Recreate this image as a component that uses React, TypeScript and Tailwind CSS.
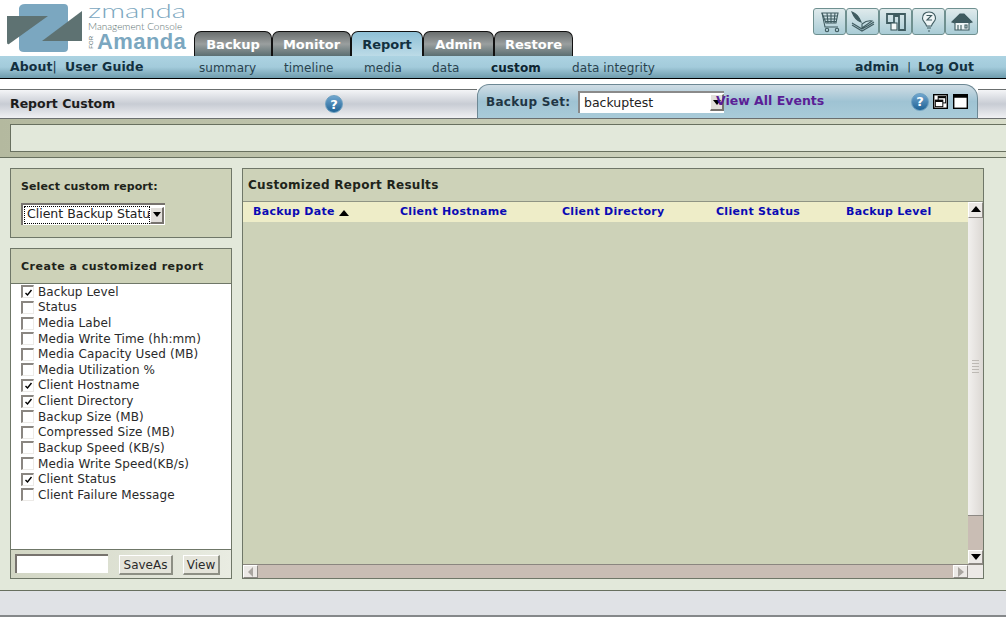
import React from 'react';

const font = { fontFamily: '"DejaVu Sans", sans-serif' };

const tabs = [
  { name: 'Backup', width: 'w-[78px]' },
  { name: 'Monitor', width: 'w-[79px]' },
  { name: 'Report', width: 'w-[72px]', active: true },
  { name: 'Admin', width: 'w-[71px]' },
  { name: 'Restore', width: 'w-[79px]' },
];

const subLinks = [
  { name: 'summary', width: 'w-[85px]' },
  { name: 'timeline', width: 'w-[80px]' },
  { name: 'media', width: 'w-[68px]' },
  { name: 'data', width: 'w-[59px]' },
  { name: 'custom', width: 'w-[81px]', bold: true },
  { name: 'data integrity', width: 'w-[100px]' },
];

const reportFields = [
  { name: 'Backup Level', checked: true },
  { name: 'Status' },
  { name: 'Media Label' },
  { name: 'Media Write Time (hh:mm)' },
  { name: 'Media Capacity Used (MB)' },
  { name: 'Media Utilization %' },
  { name: 'Client Hostname', checked: true },
  { name: 'Client Directory', checked: true },
  { name: 'Backup Size (MB)' },
  { name: 'Compressed Size (MB)' },
  { name: 'Backup Speed (KB/s)' },
  { name: 'Media Write Speed(KB/s)' },
  { name: 'Client Status', checked: true },
  { name: 'Client Failure Message' },
];

const columns = [
  { name: 'Backup Date', width: 'w-[147px]', sorted: true },
  { name: 'Client Hostname', width: 'w-[162px]' },
  { name: 'Client Directory', width: 'w-[154px]' },
  { name: 'Client Status', width: 'w-[130px]' },
  { name: 'Backup Level', width: 'w-[110px]' },
];

const Logo = () => (
  <div className="flex w-[194px] h-[56px] shrink-0 pl-[7px] pt-[4px]">
    <svg width="76" height="49" viewBox="0 0 76 49" className="shrink-0">
      <path d="M18 0 H57 Q61 0 61 4 V44 Q61 48 57 48 H17 Q12 48 12 44 V4 Q13 0 18 0 Z" fill="#7ba7c0" />
      <path d="M0 12 H41 L2 40 Q0 41 0 38 Z" fill="#5e7272" />
      <path d="M75 7 V37 H35 Z" fill="#5e7272" />
    </svg>
    <div className="ml-[5px] -mt-[3px] flex flex-col text-[#7ba7c0] leading-none">
      <span className="h-[18px] text-[20px] leading-[18px] font-light whitespace-nowrap inline-block origin-left scale-x-[1.48]" style={{ fontFamily: 'Lato, sans-serif' }}>zmanda</span>
      <span className="text-[#5e7272] text-[10px] h-[14px] leading-[14px] font-light whitespace-nowrap" style={{ fontFamily: 'Lato, sans-serif' }}>Management Console</span>
      <div className="flex items-center h-[18px]">
        <span className="text-[#5e7272] text-[6px] w-[9px] [writing-mode:vertical-rl] rotate-180" style={{ fontFamily: '"Liberation Sans", sans-serif' }}>FOR</span>
        <span className="text-[22px] font-bold leading-[18px] tracking-[0.4px]" style={{ fontFamily: '"Liberation Sans", sans-serif' }}>Amanda</span>
      </div>
    </div>
  </div>
);

const ToolIcon = ({ children }: { children: React.ReactNode }) => (
  <div className="w-[33px] h-[27px] flex items-center justify-center border border-[#6f9090] rounded-[3px] bg-gradient-to-b from-[#dfeaec] to-[#a9ccd6]">
    <svg width="26" height="22" viewBox="0 0 26 22" fill="none" stroke="#3f5b60" strokeWidth="1.1">
      {children}
    </svg>
  </div>
);

const HelpIcon = () => (
  <span className="w-[18px] h-[18px] rounded-full bg-gradient-to-b from-[#6fa6cf] to-[#1f6496] border border-[#6c9fc0] text-white text-[13px] font-bold flex items-center justify-center leading-none">?</span>
);

const WindowIcon = ({ restore }: { restore?: boolean }) => (
  <svg width="15" height="15" viewBox="0 0 16 16">
    <rect x="0.75" y="0.75" width="14.5" height="14.5" fill="#fff" stroke="#000" strokeWidth="1.5" />
    {restore ? (
      <>
        <rect x="5.5" y="2.5" width="8" height="7" fill="#fff" stroke="#000" />
        <rect x="5.5" y="2.5" width="8" height="2" fill="#000" />
        <rect x="2.5" y="6.5" width="8" height="7" fill="#fff" stroke="#000" />
        <rect x="2.5" y="6.5" width="8" height="2" fill="#000" />
      </>
    ) : (
      <rect x="1" y="1" width="14" height="3" fill="#000" />
    )}
  </svg>
);

const SelectArrow = () => (
  <span className="w-[14px] h-[17px] flex items-center justify-center bg-[#e2dfdb] border-t border-l border-white border-r-2 border-b-2 border-r-[#77736e] border-b-[#77736e] shrink-0">
    <span className="border-x-[4px] border-x-transparent border-t-[5px] border-t-black" />
  </span>
);

const ScrollButton = ({ dir, tone = 'black' }: { dir: 'up' | 'down' | 'left' | 'right'; tone?: 'black' | 'grey' }) => {
  const color = tone === 'black' ? '#000' : '#a9a5a0';
  const shapes = { up: '0,7 5,1 10,7', down: '0,2 10,2 5,8', left: '7,0 7,10 2,5', right: '2,0 2,10 8,5' };
  return (
    <span className="w-[15px] h-full flex items-center justify-center bg-[#ece9e6] border-t border-l border-white border-b border-r border-b-[#8d8984] border-r-[#8d8984] shrink-0">
      <svg width="10" height="10" viewBox="0 0 10 10"><polygon points={shapes[dir]} fill={color} /></svg>
    </span>
  );
};

const FieldRow = ({ name, checked }: { name: string; checked?: boolean }) => (
  <label className="flex items-center h-[15.62px] text-[12px] tracking-[0.1px] text-[#2a2a2a] whitespace-nowrap">
    <span className="w-[13px] h-[13px] mr-[4px] flex items-center justify-center bg-white border-t-2 border-l-2 border-t-[#8a8681] border-l-[#8a8681] border-r border-b border-r-[#eceae7] border-b-[#eceae7]">
      {checked && (
        <svg width="9" height="9" viewBox="0 0 9 9" fill="none" stroke="#000" strokeWidth="1.4"><path d="M1.5 5 L3.5 7 L7.5 2" /></svg>
      )}
    </span>
    {name}
  </label>
);

const LowerButton = ({ label, width }: { label: string; width: string }) => (
  <button type="button" className={`${width} h-[20px] text-[12px] text-[#2a2a2a] bg-[#e4e4da] border-t border-l border-white border-r-2 border-b-2 border-r-[#8d8f84] border-b-[#8d8f84] leading-none`}>
    {label}
  </button>
);

export default function App() {
  return (
    <div className="w-[1006px] h-[620px] overflow-hidden bg-white flex flex-col" style={font}>
      <header className="flex h-[56px] shrink-0">
        <Logo />
        <nav className="flex items-end h-[56px]">
          {tabs.map((tab) => (
            <div
              key={tab.name}
              className={`${tab.width} h-[25px] pt-[1px] rounded-t-[7px] border-t border-x border-[#111] flex items-center justify-center text-[13px] font-bold ${
                tab.active
                  ? 'bg-gradient-to-b from-[#8fc0d6] to-[#bcdbe7] text-[#12303f] border-b-0'
                  : 'bg-gradient-to-b from-[#6a6e6e] via-[#9a9f9f] to-[#5b6f72] text-white'
              }`}
            >
              {tab.name}
            </div>
          ))}
        </nav>
        <div className="ml-auto mr-[28px] mt-[8px] flex">
          <ToolIcon>
            <path d="M5 2 H21 L19 12 H9 Z M6 5 H20 M7 8 H20 M8 10.5 H19 M10 2 L11 12 M14 2 V12 M18 2 L17 12" />
            <path d="M5 2 L8 16 H21" />
            <circle cx="10" cy="19" r="1.7" />
            <circle cx="20" cy="19" r="1.7" />
          </ToolIcon>
          <ToolIcon>
            <path d="M2 12 L12 18 Q18 15 24 11 M2 14 L12 20 L24 13 M12 13 Q17 9 22 10 L12 17 Z" />
            <path d="M2 1 Q8 3 11 11 Q5 9 2 1 Z" fill="#3f5b60" />
          </ToolIcon>
          <ToolIcon>
            <path d="M4 3 H22 V19 H16 V5 H11 V12 H4 Z" strokeWidth="1.8" />
            <rect x="8" y="12" width="6" height="7" fill="#f2f6f6" />
          </ToolIcon>
          <ToolIcon>
            <path d="M13 1 C8 1 6.5 4.5 6.5 7.5 C6.5 10.5 10 11.5 10.5 15 H15.5 C16 11.5 19.5 10.5 19.5 7.5 C19.5 4.5 18 1 13 1 Z" fill="#eef5f6" />
            <path d="M10.5 4.5 H15.5 L11 9 H16 M11 17 H15 M12 20 H14" />
          </ToolIcon>
          <ToolIcon>
            <path d="M3 11 L11 3 H15 L23 11 L20 12 H6 Z" fill="#3f5b60" />
            <path d="M6 12 V19 H20 V12" fill="#eef5f6" />
            <path d="M9 14 V19 M12 14 V19 M16 14 V17 H18 V14 Z" />
          </ToolIcon>
        </div>
      </header>

      <div className="h-[23px] shrink-0 flex items-center pl-[10px] pr-[32px] pt-[1px] border-b border-black bg-gradient-to-b from-[#acd3e2] via-[#a3cbdb] to-[#6e9cad] text-[12.5px] tracking-[0.1px] text-[#12303f]">
        <span className="font-bold w-[55px]">About<span className="font-normal">|</span></span>
        <span className="font-bold w-[134px]">User Guide</span>
        {subLinks.map((link) => (
          <span key={link.name} className={`${link.width} text-[12px] whitespace-nowrap ${link.bold ? 'font-bold text-[#0d2430]' : 'text-[#28424e]'}`}>
            {link.name}
          </span>
        ))}
        <span className="ml-auto font-bold">admin</span>
        <span className="ml-[8px] mr-[7px] font-normal text-[11px]">|</span>
        <span className="font-bold">Log Out</span>
      </div>

      <div className="h-[40px] shrink-0 flex items-end">
        <div className="w-full h-[35px] flex items-stretch">
          <div className="mt-[5px] flex-1 flex items-center border-t border-b border-[#6b6f6f] bg-gradient-to-b from-[#f4f5f7] via-[#c8ccd4] to-[#f0f1f3]">
            <span className="ml-[10px] mt-[1px] text-[12.5px] font-bold text-[#1c1c1c] w-[315px]">Report Custom</span>
            <HelpIcon />
            <div className="w-[124px]" />
          </div>
          <div className="w-[501px] h-[35px] flex items-center rounded-tl-[12px] rounded-tr-[14px] border-t border-x border-b border-[#6d8894] border-b-[#6b6f6f] bg-gradient-to-b from-[#d0dde5] via-[#9fc3d3] to-[#a9cbd9] pl-[8px] shrink-0">
            <span className="mt-[1px] text-[12px] font-bold text-[#1f3644] w-[92px] tracking-[0.3px]">Backup Set:</span>
            <div className="w-[146px] h-[22px] flex items-center justify-between bg-white border-t-2 border-l-2 border-t-[#8a8a8a] border-l-[#8a8a8a] text-[12.5px] text-[#222] pl-[4px]">
              <span className="mt-[1px]">backuptest</span>
              <SelectArrow />
            </div>
            <span className="-ml-[8px] -mt-[1px] text-[12.5px] font-bold text-[#5b1f96] w-[195px] whitespace-nowrap">View All Events</span>
            <HelpIcon />
            <div className="ml-[4px] flex gap-[5px]">
              <WindowIcon restore />
              <WindowIcon />
            </div>
          </div>
          <div className="w-[28px] mt-[5px] border-t border-b border-[#6b6f6f] bg-gradient-to-b from-[#f4f5f7] via-[#c8ccd4] to-[#f0f1f3]" />
        </div>
      </div>

      <div className="h-[39px] shrink-0 pl-[10px] pt-[5px] border-b border-[#68705f] bg-gradient-to-r from-[#b4b99f] to-[#d8ddca]">
        <div className="h-[28px] bg-[#e2e8da] border border-r-0 border-[#68705f]" />
      </div>

      <main className="flex items-start gap-[10px] bg-[#e2e8da] px-[10px] pt-[10px] h-[432px] shrink-0">
        <div className="w-[222px] flex flex-col gap-[10px] shrink-0">
          <section className="h-[70px] bg-[#cdd2b8] border border-[#6f7768] pl-[10px] pt-[11px]">
            <h2 className="text-[11px] leading-[14px] font-bold tracking-[0.1px] text-[#20241a]">Select custom report:</h2>
            <div className="mt-[9px] w-[144px] h-[22px] flex items-center bg-white border-t-2 border-l-2 border-t-[#77736e] border-l-[#77736e] p-[1px]">
              <span className="flex-1 overflow-hidden whitespace-nowrap border border-dotted border-black h-[18px] leading-[14px] text-[12.5px] text-[#222] pl-[2px]">Client Backup Status</span>
              <SelectArrow />
            </div>
          </section>

          <section className="h-[331px] flex flex-col border border-[#6f7768]">
            <h2 className="h-[35px] shrink-0 bg-[#cdd2b8] border-b border-[#6f7768] pl-[10px] text-[11px] leading-[36px] font-bold tracking-[0.5px] text-[#20241a]">Create a customized report</h2>
            <div className="flex-1 bg-white pl-[10px]">
              {reportFields.map((field) => (
                <FieldRow key={field.name} name={field.name} checked={field.checked} />
              ))}
            </div>
            <div className="h-[29px] shrink-0 flex items-start pl-[4px] pt-[4px] border-t border-[#6f7768] bg-gradient-to-r from-[#d2d6c4] to-[#e9ece2]">
              <div className="w-[93px] h-[19px] bg-white border-t-2 border-l-2 border-t-[#77736e] border-l-[#77736e] shrink-0" />
              <div className="ml-[11px] mt-[1px] flex gap-[10px]">
                <LowerButton label="SaveAs" width="w-[54px]" />
                <LowerButton label="View" width="w-[37px]" />
              </div>
            </div>
          </section>
        </div>

        <section className="w-[742px] h-[411px] flex flex-col bg-[#cdd2b8] border border-[#6f7768] shrink-0">
          <h2 className="h-[33px] shrink-0 border-b border-[#8f9484] pl-[5px] text-[12px] leading-[33px] font-bold tracking-[0.3px] text-[#20241a]">Customized Report Results</h2>
          <div className="flex-1 flex min-h-0">
            <div className="flex-1 flex flex-col min-w-0">
              <div className="h-[20px] flex items-center pl-[10px] pt-[1px] bg-[#eeedc8] shrink-0">
                {columns.map((col) => (
                  <span key={col.name} className={`${col.width} flex items-center text-[11px] font-bold tracking-[0.3px] text-[#0a0ab4] whitespace-nowrap`}>
                    {col.name}
                    {col.sorted && <span className="ml-[4px] border-x-[5px] border-x-transparent border-b-[6px] border-b-black" />}
                  </span>
                ))}
              </div>
            </div>
            <div className="w-[15px] flex flex-col shrink-0">
              <div className="h-[16px] shrink-0"><ScrollButton dir="up" /></div>
              <div className="h-[298px] shrink-0 bg-gradient-to-r from-[#f2f0ee] to-[#dcd8d4] border-b border-[#8d8984] flex items-center justify-center">
                <span className="w-[7px] h-[14px] bg-[repeating-linear-gradient(180deg,#bdb9b4_0_1px,transparent_1px_3px)]" />
              </div>
              <div className="flex-1 bg-[#c9bdb4]" />
              <div className="h-[14px] shrink-0"><ScrollButton dir="down" /></div>
            </div>
          </div>
          <div className="h-[14px] flex shrink-0 border-t border-[#8a867f]">
            <ScrollButton dir="left" tone="grey" />
            <div className="flex-1 bg-[#c9bdb4]" />
            <ScrollButton dir="right" tone="grey" />
            <div className="w-[15px] bg-[#ece9e6] shrink-0" />
          </div>
        </section>
      </main>

      <footer className="h-[27px] shrink-0 bg-[#e0e2e6] border-t border-[#68705f] border-b-2 border-b-[#85888a]" />
    </div>
  );
}
